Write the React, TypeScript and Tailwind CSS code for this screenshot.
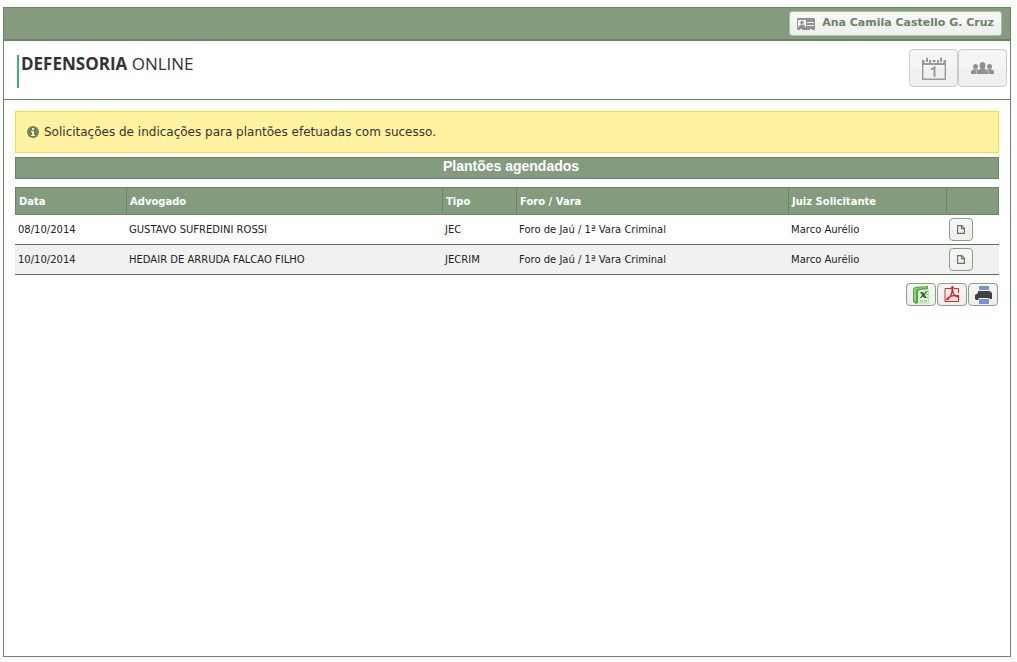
import React from 'react';

interface Plantao {
  data: string;
  advogado: string;
  tipo: string;
  foro: string;
  juiz: string;
}

const plantoes: Plantao[] = [
  {
    data: '08/10/2014',
    advogado: 'GUSTAVO SUFREDINI ROSSI',
    tipo: 'JEC',
    foro: 'Foro de Jaú / 1ª Vara Criminal',
    juiz: 'Marco Aurélio',
  },
  {
    data: '10/10/2014',
    advogado: 'HEDAIR DE ARRUDA FALCAO FILHO',
    tipo: 'JECRIM',
    foro: 'Foro de Jaú / 1ª Vara Criminal',
    juiz: 'Marco Aurélio',
  },
];

const CardIcon = () => (
  <svg width="18" height="12" viewBox="0 0 18 12" aria-hidden="true">
    <rect width="18" height="12" rx="1" fill="#919191" />
    <path fill="#f5f5f5" d="M1 2h8v7H1ZM10 4h7v1h-7ZM10 7h7v1h-7ZM3 11h2v1H3ZM13 11h2v1h-2Z" />
    <circle cx="5" cy="4.500" r="1.700" fill="#919191" />
    <path fill="#919191" d="M2 9c0-1.800 1-2.500 3-2.500S8 7.200 8 9Z" />
  </svg>
);

const CalendarIcon = () => (
  <svg width="24" height="23" viewBox="0 0 24 23" aria-hidden="true">
    <path fill="none" stroke="#999" strokeWidth="1.400" d="M.7 7v15.300h22.600V7" />
    <path fill="#999" d="M0 3h2.500v3h4.500V3h2v3h6V3h2v3h4.500V3H24v5H0Z" />
    <path fill="#999" d="M4 1.500Q5 -1 6 1.500V5H4ZM10.500 3h3v2h-3ZM18 1.500Q19 -1 20 1.500V5h-2Z" />
    <path fill="none" stroke="#999" strokeWidth="2" d="M9 12.500l3.500-2V20" />
  </svg>
);

const UsersIcon = () => (
  <svg width="23" height="12" viewBox="0 0 23 12" fill="#919191" aria-hidden="true">
    <ellipse cx="11.500" cy="3.500" rx="3" ry="3.500" />
    <path d="M5.500 12V9.800q0-1.300 1.500-1.800L10 6.500h3L16 8q1.500.5 1.500 1.800V12Z" />
    <circle cx="4.500" cy="4.500" r="2.500" />
    <path d="M0 12V9.500Q0 8.200 3 7.200h3L7 8q-2 .7-2 2v2Z" />
    <circle cx="18.500" cy="4.500" r="2.500" />
    <path d="M23 12V9.500q0-1.300-3-2.300h-3L16 8q2 .7 2 2v2Z" />
  </svg>
);

const InfoIcon = () => (
  <svg width="12" height="12" viewBox="0 0 12 12" aria-hidden="true">
    <circle cx="6" cy="6" r="6" fill="#6d8366" />
    <path fill="#fff2a0" d="M5 2h2v2H5ZM4 5h3v4h1v1H4V9h1V6H4Z" />
  </svg>
);

const PageIcon = () => (
  <svg width="8" height="9" viewBox="0 0 8 9" fill="none" stroke="#6a7566" aria-hidden="true">
    <path strokeWidth="1.200" d="M.6.6h4.200l2.600 2.600v5.200H.6ZM4.500.6v3h3" />
  </svg>
);

const ExcelIcon = () => (
  <svg width="16" height="18" viewBox="0 0 16 18" aria-hidden="true">
    <path fill="#e9f2e4" stroke="#a6c99b" strokeWidth=".6" d="M5 4h10.500v13H5Z" />
    <path fill="#55a63e" d="M0 4Q0 1 4 .7L15 0v3L7 4Q5 4.200 5 6v11l-2 1-3-2Z" />
    <path fill="#91ce78" d="M1 4.500Q1 2 4 1.800L14 1v1L6 2.700Q3 3 3 5.500V16l-2-1Z" />
    <path fill="#237a20" d="M7 6h3l1 1.700L12.500 6H14l-2.200 3L14 12h-3l-1.200-1.500L8 12H6.500l2.500-2.800Z" />
    <path fill="#74b566" d="M12 5h3v1h-3ZM13.500 8H15v1h-1.500ZM13.500 11H15v1h-1.500ZM7 14.500h3v1H7ZM11 14.500h3v1h-3Z" />
  </svg>
);

const PdfIcon = () => (
  <svg width="16" height="17" viewBox="0 0 16 17" fill="none" stroke="#f31b20" aria-hidden="true">
    <path d="M8 2.500H1v13h13.500V9M10 2.500h4.500V7" />
    <path
      strokeWidth="1.300"
      d="M9 .8c-1.500-.4-1.600 1-.8 2.700 0 3.500-1.700 7-4 9.500-1.200 1.300-2 .3-.7-.8C5.500 10.500 8 9.400 12 9.300c3 .1 3.400 1.400 1.500 1.600C10.500 10.600 9 7 8.700 4 8.500 2 9.500 2 9 .8Z"
    />
  </svg>
);

const PrinterIcon = () => (
  <svg width="17" height="18" viewBox="0 0 17 18" aria-hidden="true">
    <path fill="#7495cd" d="M4 0h10v4H4ZM4 13h10v5H4Z" />
    <path fill="#414144" d="M3 5h12l2 2v6h-2l-1-1H4l-1 2H1l-1-1V9l3-2Z" />
    <path fill="#77777a" d="M14 6h1v1h-1Z" />
  </svg>
);

const exportacoes = [
  { nome: 'Exportar para Excel', icone: <ExcelIcon /> },
  { nome: 'Exportar para PDF', icone: <PdfIcon /> },
  { nome: 'Imprimir', icone: <PrinterIcon /> },
];

const gloss = 'bg-linear-to-b from-[#f5f5f5] from-50% to-[#f0f0f0] to-50%';

const headerButton = `flex h-[38px] w-[49px] items-center justify-center rounded border border-[#cccccc] ${gloss}`;

const smallButton = `flex h-[23px] items-center justify-center rounded border border-[#84a47f] ${gloss}`;

const th = 'border-y border-l border-[#6d8366] px-[3px] text-left font-bold last:border-r';

const td = 'border-b border-[#5f7259] px-[3px]';

export const Plantoes: React.FC = () => {
  return (
    <div className="flex min-h-screen flex-col bg-white pt-[7px] pr-[6px] pb-[5px] pl-[3px] font-['DejaVu_Sans',Verdana,sans-serif] text-[#222222]">
      <div className="flex flex-1 flex-col border border-[#6d8366]">
        <div className="flex h-[33px] items-center justify-end border-b-2 border-[#6d8366] bg-[#849b7e] px-2">
          <button
            className={`flex h-[25px] items-center gap-[7px] rounded-[3px] border border-[#a3c79b] px-[7px] text-[11px] font-bold whitespace-nowrap text-[#6d8366] ${gloss}`}
          >
            <CardIcon />
            Ana Camila Castello G. Cruz
          </button>
        </div>

        <header className="flex h-[59px] items-start justify-between border-b border-[#6d8366] pt-2 pr-[3px] pl-[13px]">
          <h1 className="mt-[6px] h-[33px] border-l-2 border-[#36b374] pl-[2px] font-['Open_Sans',sans-serif] text-[17px] leading-[18px] text-[#333333]">
            <b>DEFENSORIA</b> ONLINE
          </h1>
          <nav className="flex">
            <button className={headerButton} aria-label="Plantões">
              <CalendarIcon />
            </button>
            <button className={headerButton} aria-label="Usuários">
              <UsersIcon />
            </button>
          </nav>
        </header>

        <main className="pt-[11px] pr-[11px] pl-[11px]">
          <div
            role="status"
            className="flex h-[42px] items-center gap-[5px] border border-[#fadc3c] bg-[#fff2a0] px-[11px] text-[12px] text-[#333333]"
          >
            <InfoIcon />
            Solicitações de indicações para plantões efetuadas com sucesso.
          </div>

          <h2 className="mt-1 h-[22px] border border-[#6d8366] bg-[#849b7e] pl-2 text-center font-['Liberation_Sans',Arial,sans-serif] text-[14px] leading-[16px] font-bold text-white">
            Plantões agendados
          </h2>

          <table className="mt-2 w-full table-fixed border-separate border-spacing-0 text-[10px]">
            <colgroup>
              <col className="w-[111px]" />
              <col />
              <col className="w-[74px]" />
              <col className="w-[272px]" />
              <col className="w-[158px]" />
              <col className="w-[53px]" />
            </colgroup>
            <thead>
              <tr className="h-[28px] bg-[#849b7e] text-white">
                <th className={th}>Data</th>
                <th className={th}>Advogado</th>
                <th className={th}>Tipo</th>
                <th className={th}>Foro / Vara</th>
                <th className={th}>Juiz Solicitante</th>
                <th className={th} aria-label="Ações" />
              </tr>
            </thead>
            <tbody>
              {plantoes.map((p) => (
                <tr key={p.data} className="h-[30px] even:bg-[#f1f1f1]">
                  <td className={td}>{p.data}</td>
                  <td className={td}>{p.advogado}</td>
                  <td className={td}>{p.tipo}</td>
                  <td className={td}>{p.foro}</td>
                  <td className={td}>{p.juiz}</td>
                  <td className={td}>
                    <button className={`w-[24px] ${smallButton}`} aria-label="Abrir documento">
                      <PageIcon />
                    </button>
                  </td>
                </tr>
              ))}
            </tbody>
          </table>

          <div className="mt-2 mr-px flex justify-end gap-px">
            {exportacoes.map((e) => (
              <button key={e.nome} className={`w-[30px] ${smallButton}`} aria-label={e.nome}>
                {e.icone}
              </button>
            ))}
          </div>
        </main>
      </div>
    </div>
  );
};

export default Plantoes;
